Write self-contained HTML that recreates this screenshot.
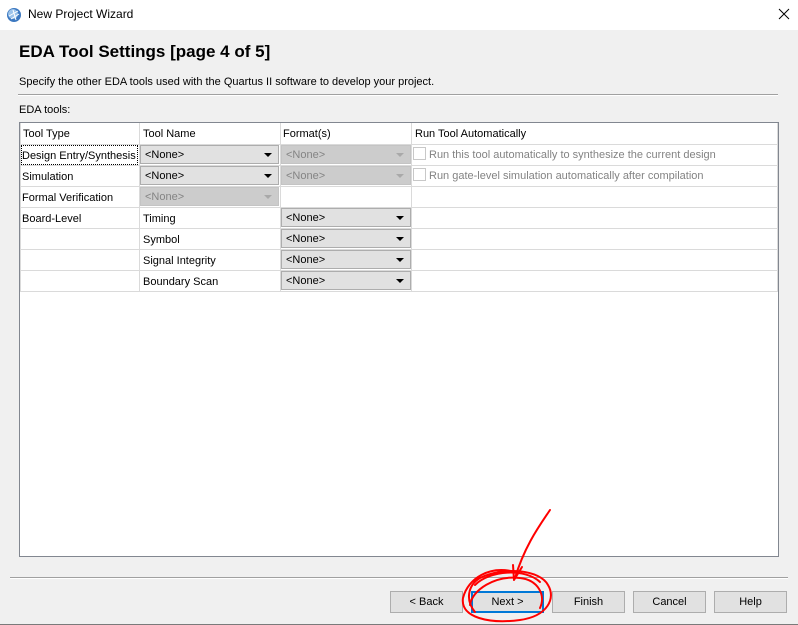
<!DOCTYPE html>
<html><head><meta charset="utf-8"><style>
*{margin:0;padding:0;box-sizing:border-box}
body{width:798px;height:625px;background:#f0f0f0;font-family:"Liberation Sans",sans-serif;font-size:11px;color:#000;position:relative;overflow:hidden}
.a{position:absolute}
.t{position:absolute;white-space:nowrap;font-size:11px;line-height:13px}
.cb{position:absolute;background:#e1e1e1;border:1px solid #adadad;height:19px}
.cb span{position:absolute;left:4px;top:3px;font-size:11px}
.cb i{position:absolute;right:6px;top:7px;width:0;height:0;border-left:4px solid transparent;border-right:4px solid transparent;border-top:4px solid #000}
.cb.d{background:#cccccc;border-color:#c4c4c4;color:#848484}
.cb.d i{border-top-color:#a9a9a9}
.h{position:absolute;height:1px;background:#dadada}
.v{position:absolute;width:1px;background:#dadada}
.btn{position:absolute;top:591px;height:22px;width:73px;background:#e1e1e1;border:1px solid #adadad;text-align:center;line-height:20px;font-size:11px}
</style></head><body>
<div class="a" style="left:0;top:0;width:798px;height:30px;background:#fff"></div>
<svg class="a" style="left:6px;top:7px" width="16" height="16" viewBox="0 0 16 16"><circle cx="8" cy="8" r="7" fill="#3c78c0"/><circle cx="7" cy="7" r="5" fill="#9cc3ea"/><path d="M3 9 L12 4 M5 12 L13 7 M7 3 L10 13" stroke="#fff" stroke-width="1"/></svg>
<div class="t" style="left:28px;top:8px;font-size:12px">New Project Wizard</div>
<svg class="a" style="left:778px;top:8px" width="12" height="12"><path d="M1 1L11 11M11 1L1 11" stroke="#000" stroke-width="1"/></svg>
<div class="t" style="left:19px;top:42px;font-size:17px;line-height:20px;font-weight:bold">EDA Tool Settings [page 4 of 5]</div>
<div class="t" style="left:19px;top:76px">Specify the other EDA tools used with the Quartus II software to develop your project.</div>
<div class="a" style="left:18px;top:94px;width:760px;height:1px;background:#a0a0a0"></div>
<div class="a" style="left:18px;top:95px;width:760px;height:1px;background:#fff"></div>
<div class="t" style="left:19px;top:104px">EDA tools:</div>
<div class="a" style="left:19px;top:122px;width:760px;height:435px;background:#fff;border:1px solid #828790"></div>
<div class="h" style="left:20px;top:144px;width:758px"></div>
<div class="h" style="left:20px;top:165px;width:758px"></div>
<div class="h" style="left:20px;top:186px;width:758px"></div>
<div class="h" style="left:20px;top:207px;width:758px"></div>
<div class="h" style="left:20px;top:228px;width:758px"></div>
<div class="h" style="left:20px;top:249px;width:758px"></div>
<div class="h" style="left:20px;top:270px;width:758px"></div>
<div class="h" style="left:20px;top:291px;width:758px"></div>
<div class="v" style="left:20px;top:123px;height:168px"></div>
<div class="v" style="left:139px;top:123px;height:168px"></div>
<div class="v" style="left:280px;top:123px;height:168px"></div>
<div class="v" style="left:411px;top:123px;height:168px"></div>
<div class="v" style="left:777px;top:123px;height:168px"></div>
<div class="t" style="left:23px;top:128px">Tool Type</div>
<div class="t" style="left:143px;top:128px">Tool Name</div>
<div class="t" style="left:283px;top:128px">Format(s)</div>
<div class="t" style="left:415px;top:128px">Run Tool Automatically</div>
<div class="a" style="left:21px;top:145px;width:117px;height:20px;border:1px dotted #000"></div>
<div class="t" style="left:22px;top:150px">Design Entry/Synthesis</div>
<div class="t" style="left:22px;top:171px">Simulation</div>
<div class="t" style="left:22px;top:192px">Formal Verification</div>
<div class="t" style="left:22px;top:213px">Board-Level</div>
<div class="t" style="left:143px;top:213px">Timing</div>
<div class="t" style="left:143px;top:234px">Symbol</div>
<div class="t" style="left:143px;top:255px">Signal Integrity</div>
<div class="t" style="left:143px;top:276px">Boundary Scan</div>
<div class="cb" style="left:140px;top:145px;width:139px"><span>&lt;None&gt;</span><i></i></div>
<div class="cb" style="left:140px;top:166px;width:139px"><span>&lt;None&gt;</span><i></i></div>
<div class="cb d" style="left:140px;top:187px;width:139px"><span>&lt;None&gt;</span><i></i></div>
<div class="cb d" style="left:281px;top:145px;width:130px"><span>&lt;None&gt;</span><i></i></div>
<div class="cb d" style="left:281px;top:166px;width:130px"><span>&lt;None&gt;</span><i></i></div>
<div class="cb" style="left:281px;top:208px;width:130px"><span>&lt;None&gt;</span><i></i></div>
<div class="cb" style="left:281px;top:229px;width:130px"><span>&lt;None&gt;</span><i></i></div>
<div class="cb" style="left:281px;top:250px;width:130px"><span>&lt;None&gt;</span><i></i></div>
<div class="cb" style="left:281px;top:271px;width:130px"><span>&lt;None&gt;</span><i></i></div>
<div class="a" style="left:413px;top:147px;width:13px;height:13px;border:1px solid #c8c8c8;background:#fff"></div>
<div class="a" style="left:413px;top:168px;width:13px;height:13px;border:1px solid #c8c8c8;background:#fff"></div>
<div class="t" style="left:429px;top:149px;color:#838383">Run this tool automatically to synthesize the current design</div>
<div class="t" style="left:429px;top:170px;color:#838383">Run gate-level simulation automatically after compilation</div>
<div class="a" style="left:10px;top:577px;width:778px;height:1px;background:#a0a0a0"></div>
<div class="a" style="left:10px;top:578px;width:778px;height:1px;background:#fff"></div>
<div class="btn" style="left:390px">&lt; Back</div>
<div class="btn" style="left:471px;border:2px solid #0078d7;line-height:18px">Next &gt;</div>
<div class="btn" style="left:552px">Finish</div>
<div class="btn" style="left:633px">Cancel</div>
<div class="btn" style="left:714px">Help</div>
<div class="a" style="left:0;top:624px;width:798px;height:1px;background:#7a7a7a"></div>
<svg class="a" style="left:0;top:0" width="798" height="625"><g fill="none" stroke="#f00" stroke-width="2" stroke-linecap="round">
<path d="M550 510 C540 525 525 545 515 578"/>
<path d="M513 565 L514 580 M522 567 L514 580"/>
<path d="M515 572 C490 565 468 578 463 598 C460 618 490 624 520 620 C548 616 556 598 548 585 C540 570 505 566 480 578 C468 585 465 600 475 612"/>
<path d="M475 585 C490 570 525 568 540 582"/>
<path d="M470 605 C472 590 495 575 520 578 C538 580 546 595 540 608"/>
</g></svg>
</body></html>
